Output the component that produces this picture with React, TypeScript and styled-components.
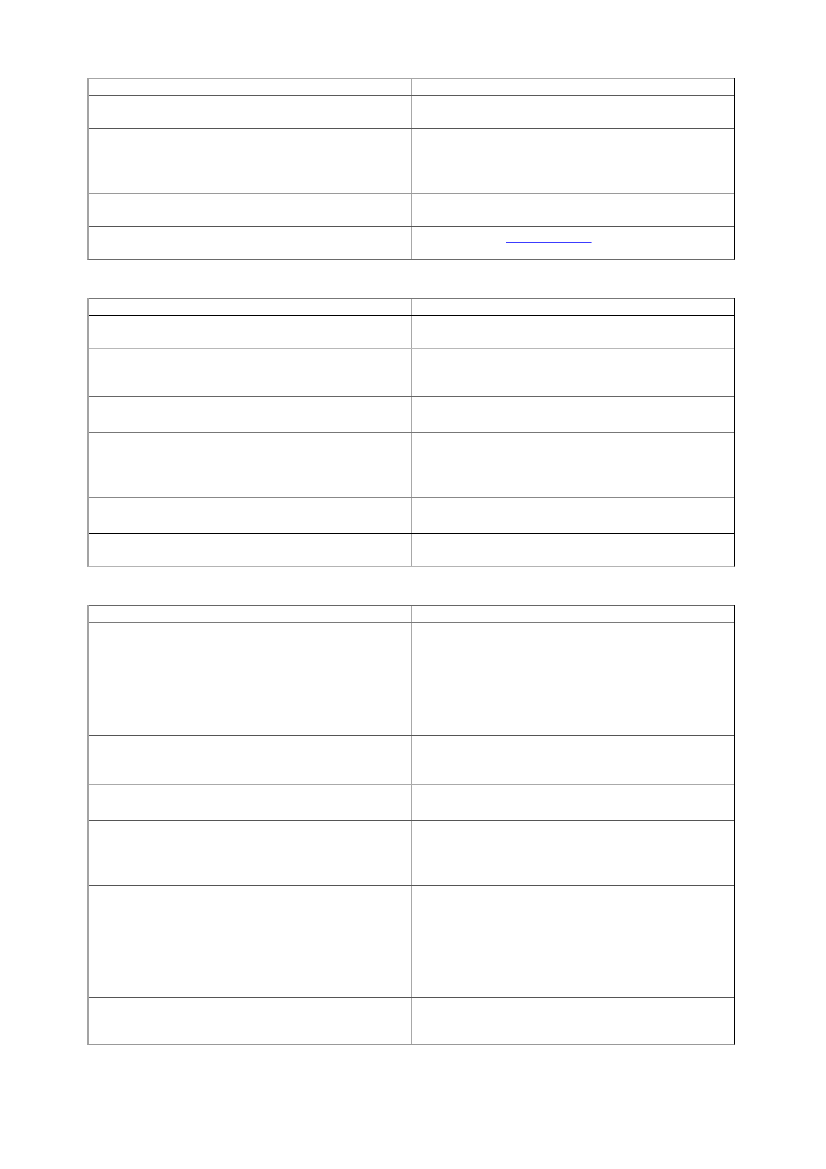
import React from 'react';
import styled, { createGlobalStyle } from 'styled-components';

const GlobalStyle = createGlobalStyle`
  html, body {
    margin: 0;
    padding: 0;
    background: #fff;
    font-family: "Liberation Sans", Arial, sans-serif;
  }
`;

type RowSpec = { h: number; line: string; link?: boolean };

const tables: { rows: RowSpec[]; bottom: string }[] = [
  {
    rows: [
      { h: 17, line: '#a6a6a6' },
      { h: 33, line: '#5a5a5a' },
      { h: 65, line: '#555' },
      { h: 33, line: '#9a9a9a' },
      { h: 33, line: '#555', link: true },
    ],
    bottom: '#6a6a6a',
  },
  {
    rows: [
      { h: 17, line: '#777' },
      { h: 33, line: '#000' },
      { h: 48, line: '#b8b8b8' },
      { h: 36, line: '#666' },
      { h: 65, line: '#777' },
      { h: 36, line: '#888' },
      { h: 33, line: '#000' },
    ],
    bottom: '#b4b4b4',
  },
  {
    rows: [
      { h: 17, line: '#666' },
      { h: 113, line: '#7a7a7a' },
      { h: 49, line: '#555' },
      { h: 36, line: '#aaa' },
      { h: 65, line: '#555' },
      { h: 112, line: '#555' },
      { h: 47, line: '#555' },
    ],
    bottom: '#999',
  },
];

const Page = styled.div`
  display: flex;
  flex-direction: column;
  gap: 38px;
  padding: 78px 0 0 87px;
`;

const Table = styled.div<{ $bottom: string }>`
  box-sizing: border-box;
  width: 648px;
  border-left: 2px solid #a3a3a3;
  border-right: 1px solid #000;
  border-bottom: 1px solid ${(p) => p.$bottom};
`;

const Row = styled.div<{ $h: number; $line: string }>`
  box-sizing: border-box;
  display: grid;
  grid-template-columns: 322px 1fr;
  height: ${(p) => p.$h}px;
  border-top: 1px solid ${(p) => p.$line};
`;

const Cell = styled.div`
  & + & {
    border-left: 1px solid #a8a8a8;
  }
`;

const LinkCell = styled(Cell)`
  padding: 0 0 0 94px;
`;

const Link = styled.a`
  display: inline-block;
  margin-top: 3px;
  width: 84px;
  font-size: 11px;
  line-height: 11px;
  color: #3c3cff;
  text-decoration: underline;
  text-decoration-thickness: 1px;
  text-underline-offset: 1px;
  white-space: pre;
`;

export default function App() {
  return (
    <>
      <GlobalStyle />
      <Page>
        {tables.map((t, i) => (
          <Table key={i} $bottom={t.bottom}>
            {t.rows.map((r, j) => (
              <Row key={j} $h={r.h} $line={r.line}>
                <Cell />
                {r.link ? (
                  <LinkCell>
                    <Link href="#">{'\u00a0'.repeat(28)}</Link>
                  </LinkCell>
                ) : (
                  <Cell />
                )}
              </Row>
            ))}
          </Table>
        ))}
      </Page>
    </>
  );
}
